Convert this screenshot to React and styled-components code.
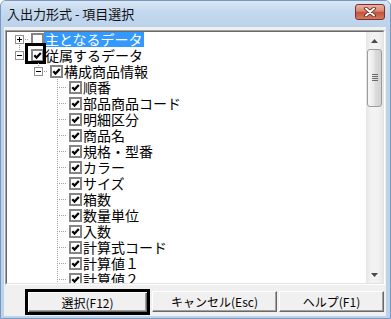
import React from "react"
import styled, { createGlobalStyle } from "styled-components"

const GlobalStyle = createGlobalStyle`
  html, body {
    margin: 0;
    padding: 0;
    background: #fff;
  }
  body {
    width: 391px;
    height: 319px;
    overflow: hidden;
    font-family: "Noto Sans CJK JP", sans-serif;
  }
  svg {
    display: block;
  }
`

const Window = styled.div`
  box-sizing: border-box;
  width: 391px;
  height: 319px;
  display: flex;
  flex-direction: column;
  background: #bcd3ec;
  border: 1px solid #7a98bd;
  border-radius: 6px 6px 0 0;
  overflow: hidden;
`

const TitleBar = styled.div`
  height: 26px;
  flex: none;
  display: flex;
  align-items: flex-start;
  padding-left: 6px;
  background: linear-gradient(#d9e6f5, #c4d8ee 40%, #bcd3ec);
`

const Title = styled.div`
  font-size: 13px;
  line-height: 26px;
  color: #111;
`

const CloseButton = styled.div`
  box-sizing: border-box;
  margin: 3px 5px 0 auto;
  width: 30px;
  height: 16px;
  border: 1px solid #7b3226;
  border-radius: 3px;
  background: linear-gradient(#eab1a5, #d98572 45%, #c5503a 50%, #d47a62);
  display: flex;
  align-items: center;
  justify-content: center;
`

const Client = styled.div`
  flex: 1;
  margin: 0 4px 2px 3px;
  padding: 3px 1px 0;
  background: #f0f0f0;
  display: flex;
  flex-direction: column;
`

const TreeBox = styled.div`
  box-sizing: border-box;
  height: 255px;
  flex: none;
  border: 1px solid;
  border-color: #a0a0a0 #fff #fff #a0a0a0;
`

const TreeInner = styled.div`
  height: 100%;
  box-sizing: border-box;
  border: 1px solid;
  border-color: #696969 #e3e3e3 #e3e3e3 #696969;
  display: flex;
`

const TreeArea = styled.div`
  flex: 1;
  background: #fff;
  padding-left: 3px;
  overflow: hidden;
`

const TreeList = styled.div`
  margin-top: -1px;
`

const Row = styled.div`
  height: 16px;
  display: flex;
  align-items: center;
  padding-left: ${p => p.$level * 19}px;
`

const Connector = styled.div`
  position: relative;
  width: 19px;
  height: 16px;
  flex: none;

  &::before {
    content: "";
    display: ${p => (p.$up || p.$down ? "block" : "none")};
    position: absolute;
    left: 9px;
    width: 1px;
    top: ${p => (p.$up ? 0 : 8)}px;
    bottom: ${p => (p.$down ? 0 : 8)}px;
    background-image: linear-gradient(to bottom, #a0a0a0 50%, transparent 50%);
    background-size: 1px 2px;
  }

  &::after {
    content: "";
    position: absolute;
    left: 10px;
    top: 8px;
    width: 9px;
    height: 1px;
    background-image: linear-gradient(to right, transparent 50%, #a0a0a0 50%);
    background-size: 2px 1px;
  }
`

const Expander = styled.svg`
  position: absolute;
  left: 5px;
  top: 4px;
  z-index: 1;
`

const CheckWrap = styled.div`
  position: relative;
  width: 13px;
  height: 13px;
  margin-left: 2px;
  flex: none;
`

const FocusFrame = styled.div`
  position: absolute;
  box-sizing: border-box;
  left: -6px;
  top: -6px;
  width: 21px;
  height: 21px;
  border: 3px solid #000;
`

const Label = styled.div`
  height: 16px;
  line-height: 16px;
  font-size: 14px;
  padding: 0 1px;
  white-space: nowrap;
  color: ${p => (p.$selected ? "#fff" : "#000")};
  background: ${p => (p.$selected ? "#3399ff" : "transparent")};
`

const ScrollBar = styled.div`
  width: 17px;
  flex: none;
  display: flex;
  flex-direction: column;
  background: linear-gradient(to right, #e6e6e6, #f2f2f2 30%, #f2f2f2 70%, #e8e8e8);
`

const Arrow = styled.div`
  height: 17px;
  flex: none;
  display: flex;
  align-items: center;
  justify-content: center;
`

const Thumb = styled.div`
  box-sizing: border-box;
  height: 58px;
  margin: 0 1px;
  flex: none;
  border: 1px solid #9b9b9b;
  border-radius: 3px;
  background: linear-gradient(to right, #f7f7f7, #e9e9e9 45%, #dcdcdc 55%, #d2d2d2);
  display: flex;
  align-items: center;
  justify-content: center;
`

const Track = styled.div`
  flex: 1;
`

const ButtonRow = styled.div`
  flex: 1;
  display: flex;
  align-items: flex-start;
  gap: 2px;
  padding: 4px 0 0 20px;
  overflow: hidden;
`

const Button = styled.div`
  box-sizing: border-box;
  flex: none;
  width: ${p => p.$width}px;
  height: ${p => (p.$default ? 26 : 21)}px;
  margin-top: ${p => (p.$default ? 0 : 2)}px;
  display: flex;
  align-items: center;
  justify-content: center;
  font-size: 12px;
  color: #000;
  background: #f0f0f0;
  border: ${p => (p.$default ? "3px solid #000" : "1px solid")};
  border-color: ${p => (p.$default ? "#000" : "#fff #696969 #696969 #fff")};
  box-shadow: ${p =>
    p.$default
      ? "inset 1px 1px #fff, inset -1px -1px #696969, inset -2px -2px #a0a0a0"
      : "inset -1px -1px #a0a0a0"};
`

const PlusMinus = ({ plus }) => (
  <Expander width="9" height="9" viewBox="0 0 9 9">
    <rect x="0.5" y="0.5" width="8" height="8" fill="#fff" stroke="#919191" />
    <path d="M2 4.5H7" stroke="#000" />
    {plus && <path d="M4.5 2V7" stroke="#000" />}
  </Expander>
)

const CheckBox = ({ checked, focused }) => (
  <CheckWrap>
    <svg width="13" height="13" viewBox="0 0 13 13">
      <rect x="1" y="1" width="11" height="11" fill="#fff" stroke="#858585" strokeWidth="2" />
      {checked && (
        <path d="M3.3 6.3 L5.5 8.6 L9.8 4" fill="none" stroke="#000" strokeWidth="2.2" />
      )}
    </svg>
    {focused && <FocusFrame />}
  </CheckWrap>
)

const leaves = [
  "順番",
  "部品商品コード",
  "明細区分",
  "商品名",
  "規格・型番",
  "カラー",
  "サイズ",
  "箱数",
  "数量単位",
  "入数",
  "計算式コード",
  "計算値１",
  "計算値２",
]

const rows = [
  { level: 0, label: "主となるデータ", expander: "plus", selected: true, down: true },
  { level: 0, label: "従属するデータ", expander: "minus", checked: true, focused: true, up: true },
  { level: 1, label: "構成商品情報", expander: "minus", checked: true, up: true },
  ...leaves.map(label => ({ level: 2, label, checked: true, up: true, down: true })),
]

const App = () => (
  <>
    <GlobalStyle />
    <Window>
      <TitleBar>
        <Title>入出力形式 - 項目選択</Title>
        <CloseButton>
          <svg width="12" height="10" viewBox="0 0 12 10">
            <path d="M2 1.5L10 8.5M10 1.5L2 8.5" stroke="#5a1d14" strokeWidth="3.6" strokeLinecap="round" />
            <path d="M2 1.5L10 8.5M10 1.5L2 8.5" stroke="#fff" strokeWidth="2" strokeLinecap="round" />
          </svg>
        </CloseButton>
      </TitleBar>
      <Client>
        <TreeBox>
          <TreeInner>
            <TreeArea>
              <TreeList>
                {rows.map(row => (
                  <Row key={row.label} $level={row.level}>
                    <Connector $up={row.up} $down={row.down}>
                      {row.expander && <PlusMinus plus={row.expander === "plus"} />}
                    </Connector>
                    <CheckBox checked={row.checked} focused={row.focused} />
                    <Label $selected={row.selected}>{row.label}</Label>
                  </Row>
                ))}
              </TreeList>
            </TreeArea>
            <ScrollBar>
              <Arrow>
                <svg width="7" height="4" viewBox="0 0 7 4">
                  <path d="M0 4L3.5 0L7 4Z" fill="#4a4a4a" />
                </svg>
              </Arrow>
              <Thumb>
                <svg width="6" height="8" viewBox="0 0 6 8">
                  <path d="M0 0.5H6M0 2.5H6M0 4.5H6M0 6.5H6" stroke="#6b6b6b" strokeWidth="1" />
                </svg>
              </Thumb>
              <Track />
              <Arrow>
                <svg width="7" height="4" viewBox="0 0 7 4">
                  <path d="M0 0L3.5 4L7 0Z" fill="#4a4a4a" />
                </svg>
              </Arrow>
            </ScrollBar>
          </TreeInner>
        </TreeBox>
        <ButtonRow>
          <Button $default $width={125}>選択(F12)</Button>
          <Button $width={125}>キャンセル(Esc)</Button>
          <Button $width={105}>ヘルプ(F1)</Button>
        </ButtonRow>
      </Client>
    </Window>
  </>
)

export default App
